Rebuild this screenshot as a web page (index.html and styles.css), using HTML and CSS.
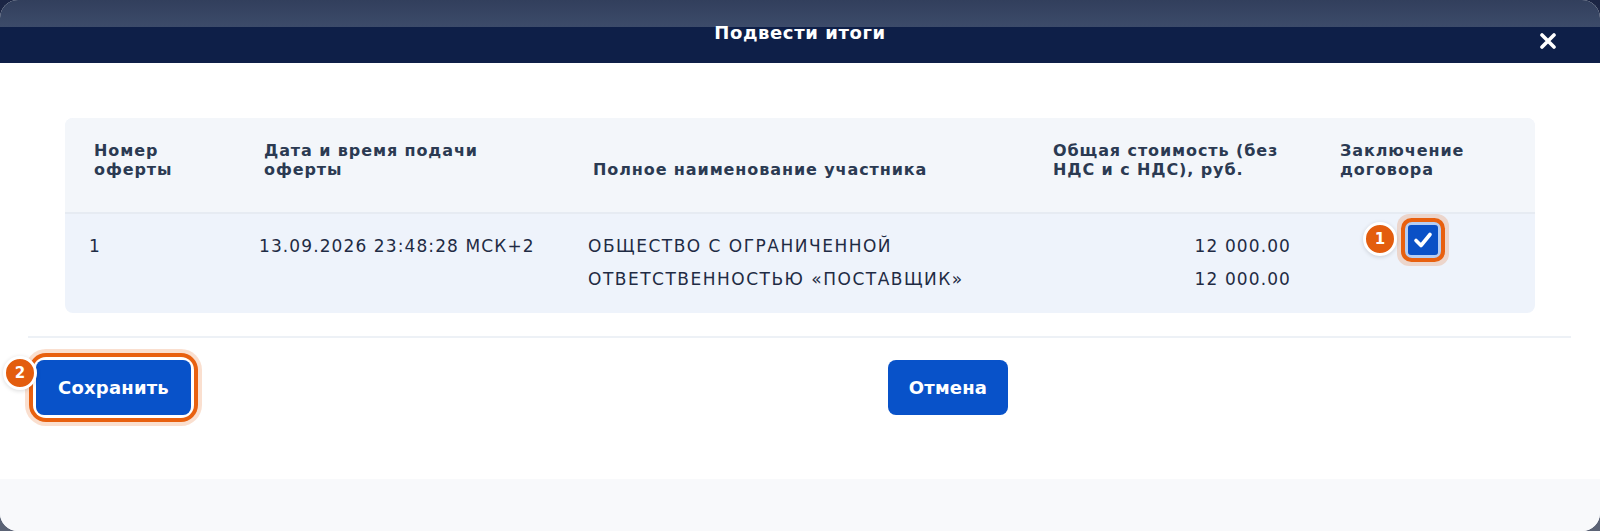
FILE: index.html
```html
<!DOCTYPE html>
<html lang="ru">
<head>
    <meta charset="UTF-8">
    <meta name="viewport" content="width=device-width, initial-scale=1.0">
    <title>Подвести итоги</title>
    <link rel="stylesheet" href="styles.css">
</head>
<body>
    <div class="modal">
        <header class="modal-head">
            <span></span>
            <h1 class="modal-title">Подвести итоги</h1>
            <button class="modal-close" type="button" aria-label="Закрыть">
                <svg width="16" height="16" viewBox="0 0 16 16">
                    <path d="M2 2 L14 14 M14 2 L2 14" stroke="#fff" stroke-width="3.6" stroke-linecap="round"/>
                </svg>
            </button>
        </header>

        <main class="modal-body">
            <!-- таблица оферт -->
            <div class="offers">
                <div class="offers-row offers-head">
                    <div class="cell">Номер<br>оферты</div>
                    <div class="cell">Дата и время подачи<br>оферты</div>
                    <div class="cell">Полное наименование участника</div>
                    <div class="cell">Общая стоимость (без<br>НДС и с НДС), руб.</div>
                    <div class="cell">Заключение<br>договора</div>
                </div>
                <div class="offers-row offers-item">
                    <div class="cell">1</div>
                    <div class="cell">13.09.2026 23:48:28 МСК+2</div>
                    <div class="cell cell-name">ОБЩЕСТВО С ОГРАНИЧЕННОЙ<br>ОТВЕТСТВЕННОСТЬЮ «ПОСТАВЩИК»</div>
                    <div class="cell cell-sum">12 000.00<br>12 000.00</div>
                    <div class="cell cell-check">
                        <label class="marked">
                            <span class="step">1</span>
                            <input type="checkbox" class="check-input" checked>
                            <span class="check-box">
                                <svg width="22" height="22" viewBox="0 0 22 22">
                                    <path d="M4 11.5 L9 16.5 L18 5.5" fill="none" stroke="#fff" stroke-width="3.6" stroke-linecap="round" stroke-linejoin="round"/>
                                </svg>
                            </span>
                        </label>
                    </div>
                </div>
            </div>

            <div class="modal-actions">
                <div class="marked marked-btn">
                    <span class="step">2</span>
                    <button class="btn btn-save" type="button">Сохранить</button>
                </div>
                <button class="btn btn-cancel" type="button">Отмена</button>
            </div>
        </main>

        <footer class="modal-foot"></footer>
    </div>
</body>
</html>
```

FILE: styles.css
```css
* {
    margin: 0;
    padding: 0;
    box-sizing: border-box;
}

body {
    font-family: 'DejaVu Sans', 'Noto Sans', sans-serif;
    background: linear-gradient(180deg, #1b2544 0%, #5b6375 100%);
    height: 100vh;
    overflow: hidden;
}

.modal {
    height: 531px;
    display: flex;
    flex-direction: column;
    border-radius: 18px;
    overflow: hidden;
    background: #fff;
}

/* шапка */
.modal-head {
    height: 63px;
    flex: none;
    display: grid;
    grid-template-columns: 1fr auto 1fr;
    padding: 0 44px;
    background: linear-gradient(180deg, #323f5c 0, #3c4b6a 27px, #0e1f48 27px);
}

.modal-title {
    padding-top: 21px;
    color: #fff;
    font-size: 18px;
    line-height: 24px;
    font-weight: 700;
    letter-spacing: 0.6px;
}

.modal-close {
    justify-self: end;
    margin-top: 33px;
    width: 16px;
    height: 16px;
    border: none;
    background: none;
    cursor: pointer;
}

.modal-close svg {
    display: block;
}

.modal-body {
    flex: 1;
    padding-top: 55px;
}

/* таблица */
.offers {
    margin: 0 65px;
    border-radius: 8px;
    overflow: hidden;
    background: #eef3fb;
}

.offers-row {
    display: grid;
    grid-template-columns: 170px 329px 460px 287px 1fr;
}

.offers-head {
    height: 96px;
    align-items: end;
    padding-bottom: 33px;
    background: #f3f6fa;
    border-bottom: 2px solid #e6ebf2;
    color: #2b3a52;
    font-size: 16px;
    font-weight: 700;
    line-height: 19px;
    letter-spacing: 0.9px;
}

.offers-head .cell {
    padding-left: 29px;
}

.offers-item {
    padding: 16px 0 17px;
    color: #1f2b44;
    font-size: 17px;
    line-height: 33px;
    letter-spacing: 1.1px;
}

.offers-item .cell {
    padding-left: 24px;
}

.offers-item .cell-name {
    letter-spacing: 1.5px;
}

.offers-item .cell-sum {
    padding: 0 20px 0 0;
    text-align: right;
}

.offers-item .cell-check {
    margin-top: -5px;
    padding: 0;
    display: flex;
    align-items: flex-start;
    justify-content: center;
}

/* подсветка шагов инструкции */
.marked {
    position: relative;
    display: block;
    border-radius: 10px;
    box-shadow: 0 0 0 3px #fff, 0 0 0 7px #e8600f, 0 0 0 11px rgba(232, 96, 15, 0.2);
}

.step {
    position: absolute;
    width: 34px;
    height: 34px;
    border-radius: 50%;
    border: 3px solid #fff;
    background: #e35d0e;
    color: #fff;
    font-size: 15px;
    font-weight: 700;
    line-height: 28px;
    letter-spacing: 0;
    text-align: center;
    box-shadow: 0 1px 4px rgba(0, 0, 0, 0.15);
}

.cell-check .marked {
    border-radius: 4px;
    box-shadow: 0 0 0 3px #b5cdf3, 0 0 0 7px #e8600f, 0 0 0 11px rgba(232, 96, 15, 0.2);
}

.cell-check .step {
    left: -45px;
    top: -3px;
}

.check-input {
    display: none;
}

.check-box {
    display: flex;
    align-items: center;
    justify-content: center;
    width: 30px;
    height: 30px;
    border-radius: 3px;
    background: #0a50c6;
}

/* кнопки */
.modal-actions {
    display: flex;
    margin: 23px 29px 0 28px;
    padding: 22px 0 0 8px;
    border-top: 2px solid #edf1f6;
}

.btn {
    height: 55px;
    border: none;
    border-radius: 8px;
    background: #0852c9;
    color: #fff;
    font-family: inherit;
    font-size: 18px;
    font-weight: 700;
    letter-spacing: 0.2px;
    cursor: pointer;
}

.btn-save {
    display: block;
    width: 155px;
}

.btn-cancel {
    width: 120px;
    margin-left: 697px;
}

.marked-btn .step {
    left: -33px;
    top: -4px;
}

.modal-foot {
    height: 52px;
    flex: none;
    background: #f8f9fb;
}
```
